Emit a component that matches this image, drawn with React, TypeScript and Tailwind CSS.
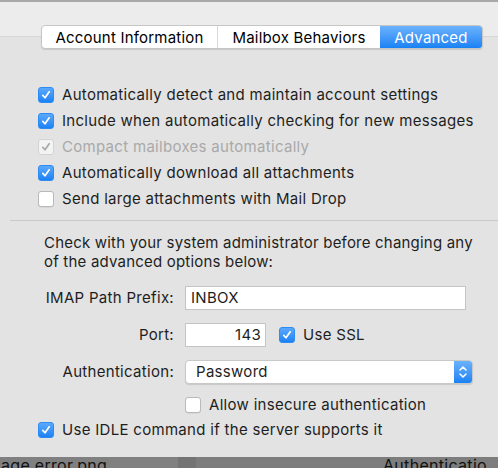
import React from "react";

function Check({ state }: { state: "on" | "off" | "dim" }) {
  if (state === "off") {
    return <span className="inline-block w-4 h-4 rounded-[3px] bg-white border border-[#b9b9b9] shadow-[0_0.5px_0.5px_rgba(0,0,0,0.1)] shrink-0" />;
  }
  const box = state === "on" ? "bg-gradient-to-b from-[#5aa9fb] to-[#1a82f5] border-[#2d8bf4]" : "bg-[#f3f3f3] border-[#d3d3d3]";
  const stroke = state === "on" ? "#ffffff" : "#a8a8a8";
  return (
    <span className={`inline-flex items-center justify-center w-4 h-4 rounded-[3px] border shrink-0 ${box}`}>
      <svg width="10" height="10" viewBox="0 0 10 10">
        <path d="M1.8 5.4 L4 7.8 L8.2 1.8" fill="none" stroke={stroke} strokeWidth="1.7" strokeLinecap="round" strokeLinejoin="round" />
      </svg>
    </span>
  );
}

function Row({ state, label }: { state: "on" | "off" | "dim"; label: string }) {
  return (
    <div className="flex items-center gap-2 h-[26px]">
      <Check state={state} />
      <span className={state === "dim" ? "text-[#a9a9a9]" : "text-[#1e1e1e]"}>{label}</span>
    </div>
  );
}

export default function App() {
  return (
    <div className="w-[498px] h-[468px] overflow-hidden bg-[#7b7b7b] flex flex-col text-[15px] tracking-[0.3px] text-[#1e1e1e]" style={{ fontFamily: 'Inter, "Liberation Sans", Arial, sans-serif' }}>
      <div className="bg-[#e3e3e3] h-[457px] flex flex-col">
        <div className="h-[2px] bg-[#a9a9a9]" />
        <div className="h-[35px] bg-[#ececec] border-b border-[#d6d6d6]" />
        <div className="flex justify-end pr-[15px] -mt-[12px]">
          <div className="flex h-[24px] rounded-[4px] border border-[#c6c6c6] bg-white shadow-[0_1px_1px_rgba(0,0,0,0.12)] overflow-hidden text-black tracking-[0.2px]">
            <div className="w-[176px] flex items-center justify-center pt-[2px] border-r border-[#d9d9d9]">Account Information</div>
            <div className="w-[162px] flex items-center justify-center pt-[2px]">Mailbox Behaviors</div>
            <div className="w-[102px] flex items-center justify-center pt-[2px] bg-gradient-to-b from-[#6ab2fb] to-[#1682f5] text-white">Advanced</div>
          </div>
        </div>
        <div className="pl-[38px] pt-[33px] flex flex-col">
          <Row state="on" label="Automatically detect and maintain account settings" />
          <Row state="on" label="Include when automatically checking for new messages" />
          <Row state="dim" label="Compact mailboxes automatically" />
          <Row state="on" label="Automatically download all attachments" />
          <Row state="off" label="Send large attachments with Mail Drop" />
        </div>
        <div className="ml-[10px] mt-[8px] h-px bg-[#cacaca]" />
        <div className="pl-[44px] pt-[12px] leading-[19px] tracking-[0.2px]">
          Check with your system administrator before changing any
          <br />
          of the advanced options below:
        </div>
        <div className="flex flex-col mt-[15px]">
          <div className="flex items-center h-[24px]">
            <span className="w-[174px] text-right">IMAP Path Prefix:</span>
            <div className="ml-[11px] w-[281px] h-[24px] bg-white border border-[#c4c4c4] flex items-center px-[5px]">INBOX</div>
          </div>
          <div className="flex items-center h-[24px] mt-[13px]">
            <span className="w-[174px] text-right">Port:</span>
            <div className="ml-[11px] w-[81px] h-[24px] bg-white border border-[#c4c4c4] flex items-center justify-end px-[4px]">143</div>
            <div className="ml-[13px] flex items-center gap-2">
              <Check state="on" />
              <span>Use SSL</span>
            </div>
          </div>
          <div className="flex items-center h-[24px] mt-[13px]">
            <span className="w-[174px] text-right">Authentication:</span>
            <div className="ml-[11px] w-[288px] h-[24px] bg-white rounded-[4px] border border-[#c8c8c8] shadow-[0_1px_1px_rgba(0,0,0,0.12)] flex overflow-hidden">
              <span className="flex-1 flex items-center pl-[10px]">Password</span>
              <span className="w-[18px] bg-gradient-to-b from-[#6ab2fb] to-[#1682f5] flex items-center justify-center">
                <svg width="10" height="14" viewBox="0 0 10 14">
                  <path d="M2 5 L5 2 L8 5 M2 9 L5 12 L8 9" fill="none" stroke="#fff" strokeWidth="1.5" strokeLinecap="round" strokeLinejoin="round" />
                </svg>
              </span>
            </div>
          </div>
          <div className="flex items-center gap-2 h-[26px] mt-[8px] pl-[185px]">
            <Check state="off" />
            <span>Allow insecure authentication</span>
          </div>
          <div className="pl-[38px] -mt-[1px]">
            <Row state="on" label="Use IDLE command if the server supports it" />
          </div>
        </div>
      </div>
      <div className="flex-1 flex text-[16px] text-[#111] leading-[14px] overflow-hidden">
        <div className="w-[178px] pt-[1px] pl-[1px] bg-[#808080]">age error.png</div>
        <div className="w-[18px] bg-[#747474]" />
        <div className="flex-1 bg-[#7d7d7d] pt-[1px] pl-[187px]">Authenticatio</div>
      </div>
    </div>
  );
}
